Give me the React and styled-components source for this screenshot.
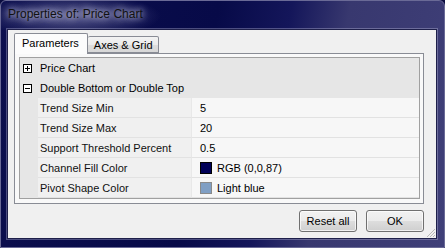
import React from "react";
import styled, { createGlobalStyle } from "styled-components";

const Global = createGlobalStyle`
  html, body { margin: 0; padding: 0; background: #0a0c40; }
  body { font-family: "Liberation Sans", Arial, sans-serif; font-size: 11px; color: #000; }
  * { box-sizing: border-box; }
`;

const Window = styled.div`
  width: 445px;
  height: 248px;
  display: flex;
  flex-direction: column;
  border: 1px solid #6a6a96;
  border-radius: 6px 6px 0 0;
  background:
    radial-gradient(ellipse 90px 22px at 70px 15px, rgba(150,150,190,0.55), rgba(150,150,190,0) 100%),
    linear-gradient(100deg, #0c0f4e 0%, #070a48 45%, #14165a 60%, #38386f 72%, #3f3f78 100%);
  overflow: hidden;
`;

const TitleBar = styled.div`
  height: 28px;
  flex: none;
  display: flex;
  align-items: center;
  padding-left: 7px;
  padding-bottom: 2px;
`;

const Title = styled.span`
  font-family: "Liberation Sans", Arial, sans-serif;
  font-size: 12px;
  color: #111;
  text-shadow: 0 0 6px rgba(230,230,255,0.9), 0 0 10px rgba(230,230,255,0.7);
`;

const Client = styled.div`
  flex: 1;
  margin: 0 7px 8px 6px;
  background: #f0f0f0;
  border: 1px solid #1e1f4a;
  box-shadow: 0 0 0 1px rgba(200,200,230,0.35);
  display: flex;
  flex-direction: column;
  padding: 3px 12px 0 6px;
  position: relative;
`;

const TabStrip = styled.div`
  display: flex;
  align-items: flex-end;
  height: 20px;
  position: relative;
  z-index: 1;
`;

const Tab = styled.div`
  height: ${(p) => (p.$active ? "21px" : "17px")};
  padding: 0 ${(p) => (p.$active ? "8px" : "5px")} 0 ${(p) => (p.$active ? "7px" : "6px")};
  display: flex;
  align-items: center;
  border: 1px solid #898c95;
  border-bottom: ${(p) => (p.$active ? "none" : "1px solid #898c95")};
  border-left: ${(p) => (p.$active ? "1px solid #898c95" : "none")};
  border-radius: 2px 2px 0 0;
  background: ${(p) =>
    p.$active ? "#fcfcfc" : "linear-gradient(#f3f3f3, #ebebeb 50%, #dcdcdc 51%, #d8d8d8)"};
  margin-bottom: ${(p) => (p.$active ? "-1px" : "0")};
  padding-bottom: ${(p) => (p.$active ? "2px" : "0")};
  font-size: 11px;
`;

const Panel = styled.div`
  width: 410px;
  height: 151px;
  border: 1px solid #898c95;
  background: #f9f9f9;
  padding: 3px 3px 4px 4px;
  display: flex;
`;

const Grid = styled.div`
  flex: 1;
  border: 1px solid #a0a0a0;
  background: #e6e6e6;
  display: flex;
  flex-direction: column;
`;

const Row = styled.div`
  height: 20px;
  display: grid;
  grid-template-columns: 18px 153px 1fr;
`;

const Margin = styled.div`
  background: #e6e6e6;
  display: flex;
  align-items: center;
  padding-left: 3px;
`;

const ExpandBox = styled.div`
  width: 9px;
  height: 9px;
  border: 1px solid #000;
  background: #fff;
  position: relative;
  &::before {
    content: "";
    position: absolute;
    left: 1px;
    top: 3px;
    width: 5px;
    height: 1px;
    background: #000;
  }
  &::after {
    content: "";
    display: ${(p) => (p.$open ? "none" : "block")};
    position: absolute;
    left: 3px;
    top: 1px;
    width: 1px;
    height: 5px;
    background: #000;
  }
`;

const CategoryLabel = styled.div`
  grid-column: 2 / 4;
  display: flex;
  align-items: center;
  padding-left: 2px;
  font-size: 11px;
`;

const Label = styled.div`
  background: #f0f0f0;
  border-bottom: 1px solid #e2e2e2;
  display: flex;
  align-items: center;
  padding: 1px 0 0 2px;
  color: #111;
`;

const Value = styled.div`
  background: #f7f7f7;
  border-bottom: 1px solid #e2e2e2;
  border-left: 1px solid #e8e8e8;
  display: flex;
  align-items: center;
  gap: 5px;
  padding: 1px 0 0 8px;
`;

const Swatch = styled.span`
  width: 12px;
  height: 12px;
  border: 1px solid ${(p) => p.$border};
  background: ${(p) => p.$color};
  flex: none;
`;

const Footer = styled.div`
  display: flex;
  justify-content: flex-end;
  gap: 9px;
  margin-top: 6px;
`;

const Button = styled.button`
  width: 58px;
  height: 22px;
  border: 1px solid #707070;
  border-radius: 3px;
  background: linear-gradient(#f2f2f2, #ebebeb 50%, #dddddd 51%, #cfcfcf);
  box-shadow: inset 0 0 0 1px rgba(255,255,255,0.7);
  font-family: "Liberation Sans", Arial, sans-serif;
  font-size: 11px;
  color: #000;
  padding: 0;
`;

const Grip = styled.svg`
  position: absolute;
  right: 0;
  bottom: 0;
`;

const rows = [
  { label: "Trend Size Min", value: "5" },
  { label: "Trend Size Max", value: "20" },
  { label: "Support Threshold Percent", value: "0.5" },
  { label: "Channel Fill Color", value: "RGB (0,0,87)", swatch: "#000057", border: "#000" },
  { label: "Pivot Shape Color", value: "Light blue", swatch: "#809fc4", border: "#8a8a8a" },
];

export default function App() {
  return (
    <>
      <Global />
      <Window>
        <TitleBar>
          <Title>Properties of: Price Chart</Title>
        </TitleBar>
        <Client>
          <TabStrip>
            <Tab $active>Parameters</Tab>
            <Tab>Axes &amp; Grid</Tab>
          </TabStrip>
          <Panel>
            <Grid>
              <Row>
                <Margin>
                  <ExpandBox />
                </Margin>
                <CategoryLabel>Price Chart</CategoryLabel>
              </Row>
              <Row>
                <Margin>
                  <ExpandBox $open />
                </Margin>
                <CategoryLabel>Double Bottom or Double Top</CategoryLabel>
              </Row>
              {rows.map((r) => (
                <Row key={r.label}>
                  <Margin />
                  <Label>{r.label}</Label>
                  <Value>
                    {r.swatch && <Swatch $color={r.swatch} $border={r.border} />}
                    {r.value}
                  </Value>
                </Row>
              ))}
            </Grid>
          </Panel>
          <Footer>
            <Button>Reset all</Button>
            <Button>OK</Button>
          </Footer>
          <Grip width="12" height="12" viewBox="0 0 12 12">
            <g stroke="#b8b8b8" strokeWidth="1">
              <line x1="11" y1="3" x2="3" y2="11" />
              <line x1="11" y1="6" x2="6" y2="11" />
              <line x1="11" y1="9" x2="9" y2="11" />
            </g>
          </Grip>
        </Client>
      </Window>
    </>
  );
}
